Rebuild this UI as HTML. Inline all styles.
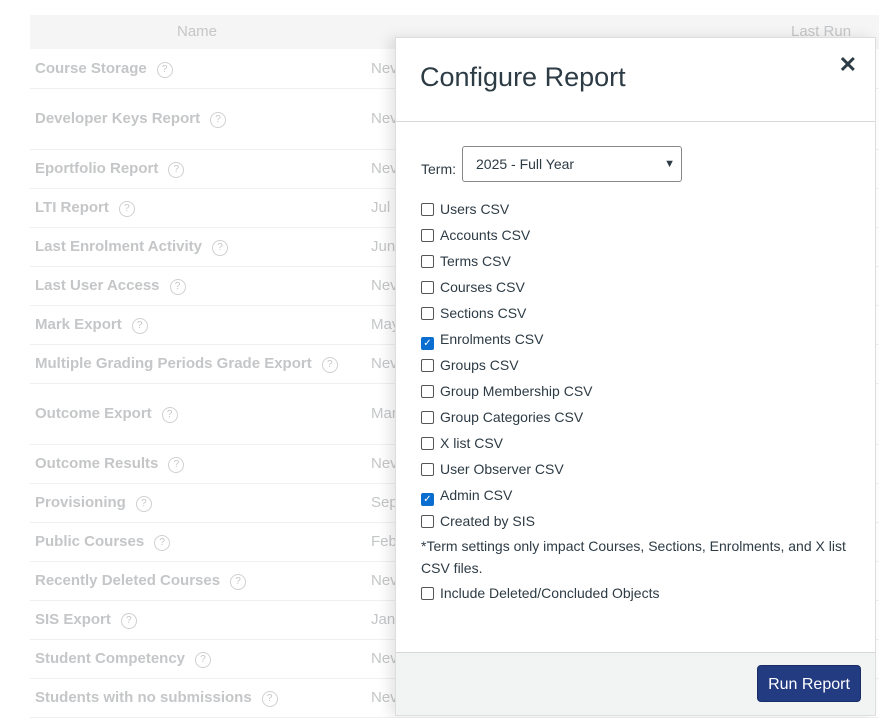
<!DOCTYPE html>
<html><head><style>
body{margin:0;width:879px;height:717px;overflow:hidden;background:#fff;font-family:"Liberation Sans",sans-serif;position:relative}
.hdr{position:absolute;left:30px;top:15px;width:849px;height:34px;background:#f5f5f5;color:#c4c6c8;font-size:15px}
.row{position:absolute;left:30px;width:849px;border-bottom:1px solid #f0f0f0;color:#c4c6c8;font-size:15px;font-weight:bold}
.row span{position:absolute;left:5px}
.row i{display:inline-block;width:14px;height:14px;border:1px solid #d0d0d0;border-radius:50%;font-size:10px;font-style:normal;font-weight:normal;text-align:center;line-height:14px;margin-left:10px;vertical-align:1px}
.row b{position:absolute;left:341px;font-weight:normal}
.modal{position:absolute;left:395px;top:37px;width:479px;height:677px;background:#fff;border:1px solid #ddd;box-shadow:-6px 0 12px rgba(0,0,0,.1);color:#2d3b45}
.title{position:absolute;left:24px;top:24px;font-size:27px}
.x{position:absolute;right:18px;top:14px;font-size:22px;font-weight:bold}
.sep{position:absolute;left:0;right:0;top:83px;border-top:1px solid #d6d9dc}
.cb{position:absolute;left:25px;font-size:14px;height:20px;line-height:20px}
.cb s{display:inline-block;width:11px;height:11px;border:1px solid #555;border-radius:2px;vertical-align:-2px;margin-right:6px;text-decoration:none}
.cb s.on{background:#0a6ed1;border-color:#0a6ed1;color:#fff;font-size:10px;line-height:11px;text-align:center}
.foot{position:absolute;left:0;right:0;bottom:0;height:62px;background:#f2f3f3;border-top:1px solid #d6d9dc}
.btn{position:absolute;left:361px;top:12px;width:104px;height:37px;background:#233b80;border:1px solid #1a2d66;border-radius:4px;color:#fff;font-size:16px;text-align:center;line-height:37px;box-sizing:border-box}
</style></head><body>
<div class="hdr"><span style="position:absolute;left:147px;top:8px">Name</span><span style="position:absolute;left:761px;top:8px">Last Run</span></div>
<div class="row" style="top:49px;height:39px"><span style="top:11px">Course Storage<i>?</i></span><b style="top:11px">Nev</b></div>
<div class="row" style="top:89px;height:60px"><span style="top:21px">Developer Keys Report<i>?</i></span><b style="top:21px">Nev</b></div>
<div class="row" style="top:150px;height:38px"><span style="top:10px">Eportfolio Report<i>?</i></span><b style="top:10px">Nev</b></div>
<div class="row" style="top:189px;height:38px"><span style="top:10px">LTI Report<i>?</i></span><b style="top:10px">Jul</b></div>
<div class="row" style="top:228px;height:38px"><span style="top:10px">Last Enrolment Activity<i>?</i></span><b style="top:10px">Jun</b></div>
<div class="row" style="top:267px;height:38px"><span style="top:10px">Last User Access<i>?</i></span><b style="top:10px">Nev</b></div>
<div class="row" style="top:306px;height:38px"><span style="top:10px">Mark Export<i>?</i></span><b style="top:10px">May</b></div>
<div class="row" style="top:345px;height:38px"><span style="top:10px">Multiple Grading Periods Grade Export<i>?</i></span><b style="top:10px">Nev</b></div>
<div class="row" style="top:384px;height:60px"><span style="top:21px">Outcome Export<i>?</i></span><b style="top:21px">Mar</b></div>
<div class="row" style="top:445px;height:38px"><span style="top:10px">Outcome Results<i>?</i></span><b style="top:10px">Nev</b></div>
<div class="row" style="top:484px;height:38px"><span style="top:10px">Provisioning<i>?</i></span><b style="top:10px">Sep</b></div>
<div class="row" style="top:523px;height:38px"><span style="top:10px">Public Courses<i>?</i></span><b style="top:10px">Feb</b></div>
<div class="row" style="top:562px;height:38px"><span style="top:10px">Recently Deleted Courses<i>?</i></span><b style="top:10px">Nev</b></div>
<div class="row" style="top:601px;height:38px"><span style="top:10px">SIS Export<i>?</i></span><b style="top:10px">Jan</b></div>
<div class="row" style="top:640px;height:38px"><span style="top:10px">Student Competency<i>?</i></span><b style="top:10px">Nev</b></div>
<div class="row" style="top:679px;height:38px"><span style="top:10px">Students with no submissions<i>?</i></span><b style="top:10px">Nev</b></div>

<div class="modal">
<div class="title">Configure Report</div>
<div class="x">✕</div>
<div class="sep"></div>
<div style="position:absolute;left:25px;top:123px;font-size:14px">Term:</div>
<div style="position:absolute;left:66px;top:108px;height:36px;border:1px solid #888;border-radius:3px;font-size:14px;line-height:34px;padding-left:13px;box-sizing:border-box;width:220px">2025 - Full Year<span style="position:absolute;right:6px;top:0;font-size:11px">&#9660;</span></div>
<div class="cb" style="top:161px"><s></s>Users CSV</div>
<div class="cb" style="top:187px"><s></s>Accounts CSV</div>
<div class="cb" style="top:213px"><s></s>Terms CSV</div>
<div class="cb" style="top:239px"><s></s>Courses CSV</div>
<div class="cb" style="top:265px"><s></s>Sections CSV</div>
<div class="cb" style="top:291px"><s class="on">✓</s>Enrolments CSV</div>
<div class="cb" style="top:317px"><s></s>Groups CSV</div>
<div class="cb" style="top:343px"><s></s>Group Membership CSV</div>
<div class="cb" style="top:369px"><s></s>Group Categories CSV</div>
<div class="cb" style="top:395px"><s></s>X list CSV</div>
<div class="cb" style="top:421px"><s></s>User Observer CSV</div>
<div class="cb" style="top:447px"><s class="on">✓</s>Admin CSV</div>
<div class="cb" style="top:473px"><s></s>Created by SIS</div>
<div style="position:absolute;left:25px;top:497px;width:430px;font-size:14px;line-height:22px">*Term settings only impact Courses, Sections, Enrolments, and X list CSV files.</div>
<div class="cb" style="top:545px"><s></s>Include Deleted/Concluded Objects</div>
<div class="foot"><div class="btn">Run Report</div></div>
</div>
</body></html>
